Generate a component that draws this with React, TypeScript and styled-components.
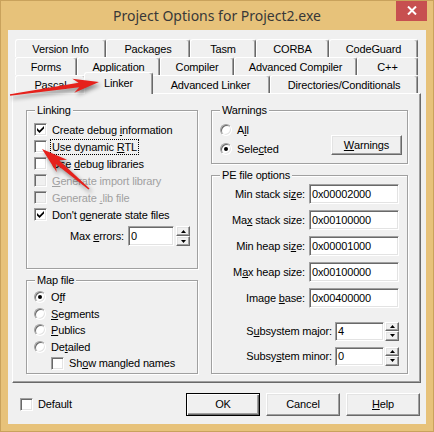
import React from 'react';
import styled, { createGlobalStyle, css } from 'styled-components';

const Global = createGlobalStyle`
  html, body { margin: 0; padding: 0; background: #e7c27a; }
  body { font-family: "Liberation Sans", Arial, sans-serif; font-size: 11px; letter-spacing: -0.15px; color: #000; }
  * { box-sizing: border-box; }
`;

const raised = css`
  border: 1px solid;
  border-color: #fff #696969 #696969 #fff;
  box-shadow: inset -1px -1px 0 #a0a0a0, inset 1px 1px 0 #e3e3e3;
`;

const sunken = css`
  border: 1px solid;
  border-color: #a0a0a0 #fff #fff #a0a0a0;
  box-shadow: inset 1px 1px 0 #696969, inset -1px -1px 0 #e3e3e3;
`;

const Window = styled.div`
  position: relative;
  width: 434px;
  height: 432px;
  background: #e7c27a;
  border: 1px solid #c9a25c;
  display: flex;
  flex-direction: column;
  overflow: hidden;
`;

const TitleBar = styled.div`
  height: 29px;
  flex: none;
  display: grid;
  grid-template-columns: 1fr auto 1fr;
  align-items: start;
`;

const Title = styled.div`
  grid-column: 2;
  padding-top: 6px;
  font-family: "Noto Sans", "Open Sans", sans-serif;
  font-size: 14px;
  line-height: 18px;
  letter-spacing: 0;
  color: #383838;
  white-space: nowrap;
`;

const CloseButton = styled.div`
  grid-column: 3;
  justify-self: end;
  margin-top: -1px;
  margin-right: 6px;
  width: 31px;
  height: 21px;
  background: #c75050;
  display: flex;
  align-items: center;
  justify-content: center;
`;

const Body = styled.div`
  flex: 1;
  margin: 0 7px 7px;
  background: #f0f0f0;
  padding: 9px 5px 0 4px;
  display: flex;
  flex-direction: column;
`;

const TabStrip = styled.div`
  display: flex;
  flex-direction: column;
  padding: 0 3px;
`;

const TabRow = styled.div`
  display: flex;
  align-items: flex-end;
  height: 18px;
`;

const Tab = styled.div<{ $w: number; $selected?: boolean }>`
  width: ${(p) => p.$w}px;
  height: 18px;
  flex: none;
  display: flex;
  align-items: center;
  justify-content: center;
  white-space: nowrap;
  background: #f0f0f0;
  border-top: 1px solid #fff;
  border-left: 1px solid #fff;
  border-right: 1px solid #696969;
  box-shadow: inset -1px 0 0 #a0a0a0;
  border-radius: 3px 3px 0 0;
  padding-top: 1px;
  ${(p) =>
    p.$selected &&
    css`
      position: relative;
      z-index: 2;
      width: ${p.$w + 4}px;
      height: 22px;
      margin: 0 -2px -1px;
      padding-top: 0;
      padding-bottom: 2px;
    `}
`;

const Panel = styled.div`
  position: relative;
  z-index: 1;
  height: 290px;
  border: 1px solid;
  border-color: #fff #696969 #696969 #fff;
  box-shadow: inset -1px -1px 0 #a0a0a0;
  padding: 16px 0 0 13px;
  display: grid;
  grid-template-columns: 172px 197px;
  column-gap: 13px;
  align-items: start;
`;

const Column = styled.div`
  display: flex;
  flex-direction: column;
  gap: 11px;
`;

const Group = styled.div<{ $h: number; $pt: number; $pr?: number }>`
  position: relative;
  height: ${(p) => p.$h}px;
  border: 1px solid #a0a0a0;
  box-shadow: inset 1px 1px 0 #fff, 1px 1px 0 #fff;
  padding-top: ${(p) => p.$pt}px;
  padding-right: ${(p) => p.$pr ?? 0}px;
`;

const Caption = styled.span`
  position: absolute;
  top: -7px;
  left: 8px;
  padding: 0 2px;
  line-height: 13px;
  background: #f0f0f0;
`;

const Option = styled.div<{ $h?: number; $indent?: number; $disabled?: boolean }>`
  display: flex;
  align-items: center;
  gap: 5px;
  height: ${(p) => p.$h ?? 17}px;
  padding-left: ${(p) => p.$indent ?? 7}px;
  white-space: nowrap;
  color: ${(p) => (p.$disabled ? '#a0a0a0' : '#000')};
`;

const Box = styled.span<{ $disabled?: boolean }>`
  ${sunken};
  width: 13px;
  height: 13px;
  flex: none;
  background: ${(p) => (p.$disabled ? '#f0f0f0' : '#fff')};
  display: flex;
  align-items: center;
  justify-content: center;
`;

const Round = styled.span<{ $on?: boolean }>`
  ${sunken};
  width: 12px;
  height: 12px;
  flex: none;
  border-radius: 50%;
  background: #fff;
  display: flex;
  align-items: center;
  justify-content: center;
  &::after {
    content: '';
    width: 4px;
    height: 4px;
    border-radius: 50%;
    background: #000;
    display: ${(p) => (p.$on ? 'block' : 'none')};
  }
`;

const Focus = styled.span`
  outline: 1px dotted #000;
  outline-offset: 0;
  padding: 0 1px;
  margin-left: -1px;
  line-height: 14px;
`;

const Key = styled.u`
  text-decoration: underline;
  text-underline-offset: 1px;
`;

const FieldRow = styled.div<{ $h?: number; $mt?: number; $pr: number; $gap: number }>`
  display: flex;
  align-items: center;
  justify-content: flex-end;
  height: ${(p) => p.$h ?? 20}px;
  margin-top: ${(p) => p.$mt ?? 0}px;
  padding-right: ${(p) => p.$pr}px;
  gap: ${(p) => p.$gap}px;
  white-space: nowrap;
`;

const Field = styled.div<{ $w: number; $h?: number }>`
  ${sunken};
  width: ${(p) => p.$w}px;
  height: ${(p) => p.$h ?? 20}px;
  background: #fff;
  padding: 0 2px;
  display: flex;
  align-items: center;
  flex: none;
`;

const Spin = styled.div<{ $h: number }>`
  width: 14px;
  height: ${(p) => p.$h}px;
  margin-left: -2px;
  display: flex;
  flex-direction: column;
  flex: none;
`;

const SpinButton = styled.div`
  ${raised};
  flex: 1;
  background: #f0f0f0;
  display: flex;
  align-items: center;
  justify-content: center;
`;

const Radios = styled.div`
  display: flex;
  flex-direction: column;
`;

const WarningsLayout = styled.div`
  display: flex;
  justify-content: space-between;
  align-items: flex-start;
`;

const PushButton = styled.div<{ $w: number; $h: number; $default?: boolean; $mt?: number }>`
  ${raised};
  width: ${(p) => p.$w}px;
  height: ${(p) => p.$h}px;
  margin-top: ${(p) => p.$mt ?? 0}px;
  background: #f0f0f0;
  display: flex;
  align-items: center;
  justify-content: center;
  flex: none;
  ${(p) =>
    p.$default &&
    css`
      border-color: #000;
      box-shadow: inset 1px 1px 0 #fff, inset -1px -1px 0 #696969, inset -2px -2px 0 #a0a0a0;
    `}
`;

const Footer = styled.div`
  flex: 1;
  display: flex;
  align-items: center;
  padding: 1px 1px 0 8px;
`;

const Buttons = styled.div`
  margin-left: auto;
  display: flex;
  gap: 6px;
`;

const Overlay = styled.svg`
  position: absolute;
  left: 0;
  top: 0;
  pointer-events: none;
  z-index: 10;
  overflow: visible;
  filter: drop-shadow(2px 3px 2px rgba(0, 0, 0, 0.45));
`;

function mn(text: string, i: number) {
  if (i < 0) return text;
  return (
    <>
      {text.slice(0, i)}
      <Key>{text[i]}</Key>
      {text.slice(i + 1)}
    </>
  );
}

const Check = () => (
  <svg width="7" height="7" viewBox="0 0 7 7">
    <polygon points="0,2 2.5,4.5 7,0 7,2.6 2.5,7 0,4.6" fill="#000" />
  </svg>
);

const Up = () => (
  <svg width="5" height="3" viewBox="0 0 5 3">
    <polygon points="2.5,0 5,3 0,3" fill="#000" />
  </svg>
);
const Down = () => (
  <svg width="5" height="3" viewBox="0 0 5 3">
    <polygon points="0,0 5,0 2.5,3" fill="#000" />
  </svg>
);

function CheckOption(props: {
  label: React.ReactNode;
  checked?: boolean;
  disabled?: boolean;
  indent?: number;
  h?: number;
}) {
  return (
    <Option $disabled={props.disabled} $indent={props.indent} $h={props.h}>
      <Box $disabled={props.disabled}>{props.checked && <Check />}</Box>
      <span>{props.label}</span>
    </Option>
  );
}

function RadioOption(props: { label: React.ReactNode; on?: boolean; h?: number; indent?: number }) {
  return (
    <Option $h={props.h} $indent={props.indent}>
      <Round $on={props.on} />
      <span>{props.label}</span>
    </Option>
  );
}

function SpinField(props: { value: string; w: number; h: number }) {
  return (
    <>
      <Field $w={props.w} $h={props.h}>{props.value}</Field>
      <Spin $h={props.h}>
        <SpinButton>
          <Up />
        </SpinButton>
        <SpinButton>
          <Down />
        </SpinButton>
      </Spin>
    </>
  );
}

type TabDef = { label: string; w: number; selected?: boolean };
const tabRows: TabDef[][] = [
  [
    { label: 'Version Info', w: 91 },
    { label: 'Packages', w: 84 },
    { label: 'Tasm', w: 66 },
    { label: 'CORBA', w: 73 },
    { label: 'CodeGuard', w: 89 },
  ],
  [
    { label: 'Forms', w: 62 },
    { label: 'Application', w: 83 },
    { label: 'Compiler', w: 74 },
    { label: 'Advanced Compiler', w: 123 },
    { label: 'C++', w: 61 },
  ],
  [
    { label: 'Pascal', w: 71 },
    { label: 'Linker', w: 65, selected: true },
    { label: 'Advanced Linker', w: 119 },
    { label: 'Directories/Conditionals', w: 148 },
  ],
];

const peRows: [string, number, string][] = [
  ['Min stack size:', 12, '0x00002000'],
  ['Max stack size:', 2, '0x00100000'],
  ['Min heap size:', 11, '0x00001000'],
  ['Max heap size:', 1, '0x00100000'],
  ['Image base:', 6, '0x00400000'],
];

function arrow(tx: number, ty: number, hx: number, hy: number, tw: number, sw: number, hl: number, hw: number) {
  const dx = hx - tx;
  const dy = hy - ty;
  const L = Math.hypot(dx, dy);
  const ux = dx / L;
  const uy = dy / L;
  const px = -uy;
  const py = ux;
  const bx = hx - ux * hl;
  const by = hy - uy * hl;
  const nx = hx - ux * hl * 0.78;
  const ny = hy - uy * hl * 0.78;
  const pts = [
    [tx + (px * tw) / 2, ty + (py * tw) / 2],
    [nx + (px * sw) / 2, ny + (py * sw) / 2],
    [bx + (px * hw) / 2, by + (py * hw) / 2],
    [hx, hy],
    [bx - (px * hw) / 2, by - (py * hw) / 2],
    [nx - (px * sw) / 2, ny - (py * sw) / 2],
    [tx - (px * tw) / 2, ty - (py * tw) / 2],
  ];
  return pts.map((p) => p.map((v) => v.toFixed(1)).join(',')).join(' ');
}

export default function App() {
  return (
    <>
      <Global />
      <Window>
        <TitleBar>
          <Title>Project Options for Project2.exe</Title>
          <CloseButton aria-label="Close">
            <svg width="10" height="9" viewBox="0 0 10 9">
              <path d="M1 0.5 L9 8.5 M9 0.5 L1 8.5" stroke="#fff" strokeWidth="2" />
            </svg>
          </CloseButton>
        </TitleBar>
        <Body>
          <TabStrip>
            {tabRows.map((row, i) => (
              <TabRow key={i}>
                {row.map((t) => (
                  <Tab key={t.label} $w={t.w} $selected={t.selected}>
                    {t.label}
                  </Tab>
                ))}
              </TabRow>
            ))}
          </TabStrip>
          <Panel>
            <Column>
              <Group $h={159} $pt={10}>
                <Caption>Linking</Caption>
                <CheckOption checked label={mn('Create debug information', 13)} />
                <Option>
                  <Box />
                  <Focus>{mn('Use dynamic RTL', 12)}</Focus>
                </Option>
                <CheckOption label={mn('Use debug libraries', 4)} />
                <CheckOption disabled label={mn('Generate import library', 0)} />
                <CheckOption disabled label={mn('Generate .lib file', 9)} />
                <CheckOption checked label={mn("Don't generate state files", 7)} />
                <FieldRow $mt={3} $pr={7} $gap={4}>
                  <span>{mn('Max errors:', 4)}</span>
                  <SpinField value="0" w={46} h={20} />
                </FieldRow>
              </Group>
              <Group $h={94} $pt={8}>
                <Caption>Map file</Caption>
                <RadioOption on h={16.5} label={mn('Off', 1)} />
                <RadioOption h={16.5} label={mn('Segments', 0)} />
                <RadioOption h={16.5} label={mn('Publics', 0)} />
                <RadioOption h={16.5} label={mn('Detailed', 2)} />
                <CheckOption indent={24} h={16.5} label={mn('Show mangled names', 2)} />
              </Group>
            </Column>
            <Column>
              <Group $h={54} $pt={9} $pr={5}>
                <Caption>Warnings</Caption>
                <WarningsLayout>
                  <Radios>
                    <RadioOption h={19} indent={8} label={mn('All', 1)} />
                    <RadioOption h={19} indent={8} on label={mn('Selected', 4)} />
                  </Radios>
                  <PushButton $w={71} $h={20} $mt={15}>
                    {mn('Warnings', 0)}
                  </PushButton>
                </WarningsLayout>
              </Group>
              <Group $h={199} $pt={8}>
                <Caption>PE file options</Caption>
                {peRows.map(([label, k, value], i) => (
                  <FieldRow key={label} $mt={i === 0 ? 0 : 6} $pr={8} $gap={4}>
                    <span>{mn(label, k)}</span>
                    <Field $w={90}>{value}</Field>
                  </FieldRow>
                ))}
                <FieldRow $mt={13} $pr={8} $gap={3}>
                  <span>{mn('Subsystem major:', 1)}</span>
                  <SpinField value="4" w={49} h={19} />
                </FieldRow>
                <FieldRow $mt={5} $pr={8} $gap={3}>
                  <span>{mn('Subsystem minor:', 5)}</span>
                  <SpinField value="0" w={49} h={19} />
                </FieldRow>
              </Group>
            </Column>
          </Panel>
          <Footer>
            <Option $indent={0} $h={17}>
              <Box />
              <span>Default</span>
            </Option>
            <Buttons>
              <PushButton $w={74} $h={23} $default>
                OK
              </PushButton>
              <PushButton $w={74} $h={23}>
                Cancel
              </PushButton>
              <PushButton $w={74} $h={23}>
                {mn('Help', 0)}
              </PushButton>
            </Buttons>
          </Footer>
        </Body>
        <Overlay width="434" height="432" viewBox="0 0 434 432">
          <polygon points={arrow(9, 94, 98, 81, 1.5, 4.5, 26, 14)} fill="#e5211c" />
          <polygon points={arrow(88, 188, 41, 148, 1.5, 5, 26, 16)} fill="#e5211c" />
        </Overlay>
      </Window>
    </>
  );
}
